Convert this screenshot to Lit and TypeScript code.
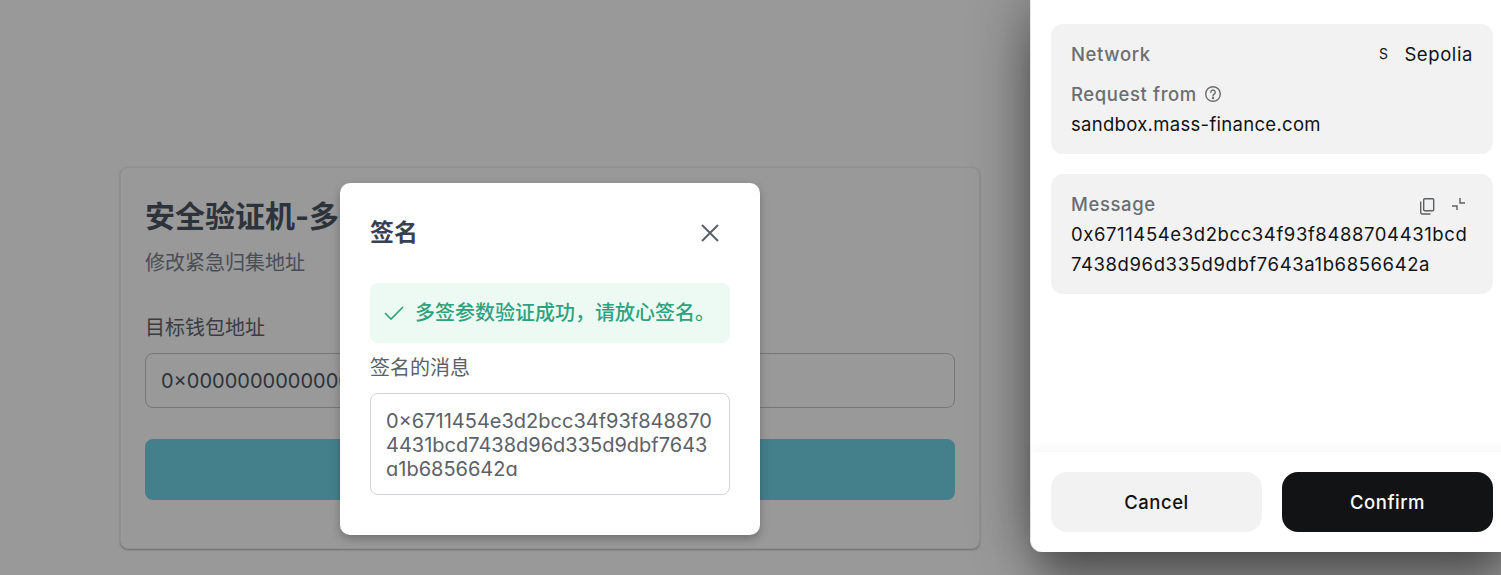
import { LitElement, html, css } from "lit";
import { customElement } from "lit/decorators.js";

@customElement("app-root")
export class AppRoot extends LitElement {
  static styles = css`
    :host { display: block; width: 1501px; height: 575px; position: relative; overflow: hidden; background: #fff;
      font-family: Inter, "Noto Sans CJK SC", sans-serif; }
    * { box-sizing: border-box; }
    .page { height: 575px; padding: 167px 521px 26px 120px; }
    .card { height: 382px; border: 1px solid #f0f0f0; border-radius: 8px; padding: 25px 24px 0; box-shadow: 0 1px 2px rgba(0,0,0,.3); background: #fff; }
    .title { font-size: 30px; line-height: 46px; font-weight: 700; color: #4b5563; white-space: nowrap; }
    .sub { font-size: 20px; line-height: 30px; color: #7a828c; margin-top: 9px; }
    .lab { font-size: 20px; line-height: 30px; color: #5f6670; margin-top: 35px; }
    .input { height: 55px; margin-top: 10px; border: 1px solid #c4c8ce; border-radius: 8px; padding: 0 15px; display: flex; align-items: center;
      font-size: 20px; color: #4b5563; white-space: nowrap; overflow: hidden; font-feature-settings: "cv11"; }
    .btn { height: 61px; margin-top: 31px; background: #70d5ea; border-radius: 8px; }
    .overlay { position: absolute; inset: 0; background: rgba(0,0,0,.4); }
    .modal { position: absolute; left: 340px; top: 183px; width: 420px; height: 352px; background: #fff; border-radius: 10px; padding: 30px;
      box-shadow: 0 4px 10px rgba(0,0,0,.25); }
    .mhead { display: flex; justify-content: space-between; align-items: center; height: 40px; }
    .mtitle { font-size: 24px; font-weight: 700; color: #374151; margin-bottom: 6px; }
    .close { width: 24px; height: 24px; margin-right: 8px; display: block; }
    .alert { height: 60px; margin-top: 30px; border-radius: 8px; background: #ecfaf3; display: flex; align-items: center; padding: 0 0 3px 14px; gap: 11px;
      font-size: 20px; font-weight: 500; color: #2ea27e; white-space: nowrap; }
    .alert svg { width: 20px; height: 20px; flex: none; }
    .mlab { font-size: 20px; line-height: 30px; color: #5b6168; margin-top: 10px; }
    .area { height: 102px; margin-top: 10px; border: 1px solid #d1d5db; border-radius: 8px; padding: 15px 15px 0; font-size: 20px; line-height: 24px; color: #5b6168;
      word-break: break-all; font-feature-settings: "cv11"; }
    .panel { position: absolute; left: 1030px; top: 0; width: 483px; height: 552px; background: #fff; border-left: 1px solid #e6e6e6; border-radius: 0 0 0 12px;
      box-shadow: 0 0 60px rgba(0,0,0,.45), 0 40px 40px -10px rgba(0,0,0,.3); display: flex; flex-direction: column; color: #111315; font-size: 18.5px; line-height: 30px; letter-spacing: .3px;
      font-variant-ligatures: none; font-feature-settings: "calt" 0; }
    .body { flex: 1; padding: 24px 20px 0; display: flex; flex-direction: column; gap: 20px; }
    .box { width: 442px; background: #f2f2f2; border-radius: 12px; padding: 15px 20px; }
    .row { display: flex; justify-content: space-between; align-items: center; }
    .k { color: #6b6e70; font-weight: 500; letter-spacing: .6px; }
    .net { display: flex; align-items: center; gap: 15px; letter-spacing: .6px; }
    .s { font-size: 14px; width: 12px; text-align: center; letter-spacing: 0; }
    .req { display: flex; align-items: center; gap: 7px; margin-top: 10px; }
    .req svg { width: 18px; height: 18px; }
    .tools { display: flex; gap: 14px; margin-right: 5px; padding-top: 4px; }
    .tools svg { width: 18px; height: 18px; display: block; }
    .msg { word-break: break-all; letter-spacing: .6px; }
    .foot { height: 100px; padding: 20px; display: flex; gap: 20px; box-shadow: 0 -4px 10px rgba(0,0,0,.035); }
    .b { width: 211px; height: 60px; border-radius: 16px; display: flex; align-items: center; justify-content: center; font-weight: 500; letter-spacing: .5px; padding-bottom: 1px; }
    .c { background: #f2f2f2; color: #111315; }
    .o { background: #111315; color: #fff; }
  `;

  render() {
    return html`
      <div class="page">
        <div class="card">
          <div class="title">安全验证机-多签</div>
          <div class="sub">修改紧急归集地址</div>
          <div class="lab">目标钱包地址</div>
          <div class="input">0×0000000000000000000000000000000000000000</div>
          <div class="btn"></div>
        </div>
      </div>
      <div class="overlay"></div>
      <div class="modal">
        <div class="mhead">
          <div class="mtitle">签名</div>
          <svg class="close" viewBox="0 0 24 24" fill="none" stroke="#5b6168" stroke-width="2"><path d="M4 4 20 20M20 4 4 20"/></svg>
        </div>
        <div class="alert">
          <svg viewBox="0 0 20 20" fill="none" stroke="#2ea27e" stroke-width="1.6"><path d="M1 11 7 17 19 5"/></svg>
          多签参数验证成功，请放心签名。
        </div>
        <div class="mlab">签名的消息</div>
        <div class="area">0×6711454e3d2bcc34f93f8488704431bcd7438d96d335d9dbf7643a1b6856642a</div>
      </div>
      <div class="panel">
        <div class="body">
          <div class="box">
            <div class="row"><span class="k">Network</span><span class="net"><span class="s">S</span>Sepolia</span></div>
            <div class="req"><span class="k">Request from</span>
              <svg viewBox="0 0 18 18" fill="none" stroke="#6b6e70" stroke-width="1.4"><circle cx="9" cy="9" r="7.3"/><path d="M6.8 7.2a2.2 2.2 0 1 1 3.4 1.9c-.8.5-1.2.9-1.2 1.8" stroke-linecap="round"/><circle cx="9" cy="13" r=".5" fill="#6b6e70"/></svg>
            </div>
            <div>sandbox.mass-finance.com</div>
          </div>
          <div class="box">
            <div class="row"><span class="k">Message</span>
              <span class="tools">
                <svg viewBox="0 0 18 18" fill="none" stroke="#5d6062" stroke-width="1.4"><rect x="5.7" y="1.7" width="10" height="12" rx="1"/><path d="M2.7 4.5v11a1.5 1.5 0 0 0 1.5 1.5h8.3"/></svg>
                <svg viewBox="0 0 18 18" fill="none" stroke="#5d6062" stroke-width="1.4"><path d="M10 1v5h5M2 9h5v4"/></svg>
              </span>
            </div>
            <div class="msg">0x6711454e3d2bcc34f93f8488704431bcd7438d96d335d9dbf7643a1b6856642a</div>
          </div>
        </div>
        <div class="foot"><div class="b c">Cancel</div><div class="b o">Confirm</div></div>
      </div>
    `;
  }
}
